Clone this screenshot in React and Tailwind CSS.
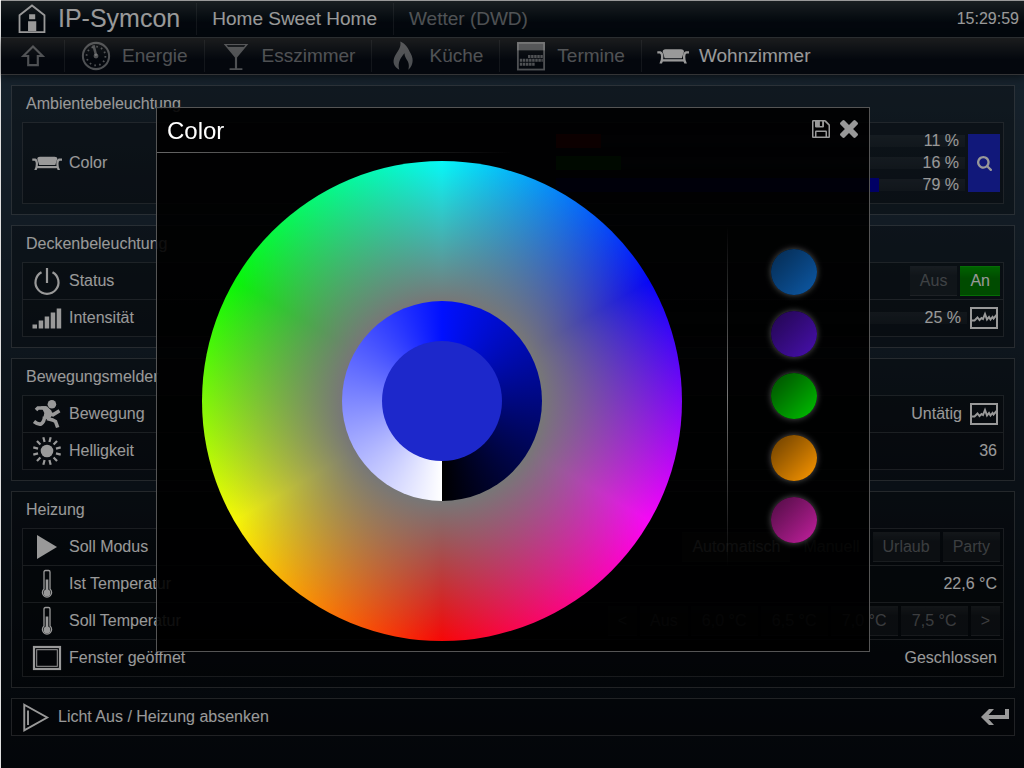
import React from "react";

function Icon({ children, size = "size-[30px]", className = "" }) {
  return (
    <svg viewBox="0 0 30 30" aria-hidden="true" fill="currentColor" className={`${size} shrink-0 ${className}`}>
      {children}
    </svg>
  );
}

const HouseIcon = () => (
  <Icon size="size-8">
    <path d="M3.300 27.300V11.500L15 2.300 26.700 11.500v15.800z" fill="none" stroke="currentColor" strokeWidth="1.700" />
    <path d="M12.300 10.500h5.700v4.700h-5.700zM11.300 17h7.700v9.300h-7.700z" />
  </Icon>
);

const UpIcon = () => (
  <Icon size="size-8">
    <path d="M15 6L24 15H19.500v8.500H10.500V15H6z" fill="none" stroke="currentColor" strokeWidth="2" />
  </Icon>
);

const GaugeIcon = () => (
  <Icon size="size-8">
    <circle cx="15" cy="15" r="12.300" fill="none" stroke="currentColor" strokeWidth="1.900" />
    <circle cx="15" cy="15" r="8.800" fill="none" stroke="currentColor" strokeWidth="1.700" strokeDasharray="1.500 3.107" />
    <circle cx="15" cy="15" r="2.300" />
    <path d="M11.500 5.200l2.300-.6L16.300 14.500l-2.300.6z" />
  </Icon>
);

const GlassIcon = () => (
  <Icon size="size-8">
    <path d="M3.500 3.800h23L16 16.500V26.500h5v1.600H9v-1.600h5V16.500z" />
    <path d="M6.200 4.900h17.600l-1.300 1.500H7.500z" fill="#0a0f16" />
  </Icon>
);

const FlameIcon = () => (
  <Icon size="size-8">
    <path d="M12.500 1.500c5 2.500 7 5.500 8.500 9 4 6 4.500 12-1 17.500 1.300-5 0-7.500-2-10.500-1-1.500-1.600-3-1.500-5-3 3-7 8.500-5 15.500-5-3-6.500-7-4.500-12 3-6 6.500-8.500 5.500-14.500z" />
  </Icon>
);

const CalendarIcon = () => (
  <Icon size="size-8">
    <rect x="2.700" y="2.700" width="24.600" height="25" fill="none" stroke="currentColor" strokeWidth="1.700" />
    <rect x="2" y="2" width="26" height="7.700" />
    <path d="M12.200 15.500H26M4.500 19H26M4.500 22.700h14.500" fill="none" stroke="currentColor" strokeWidth="2.900" strokeDasharray="2.300 .6" />
  </Icon>
);

const SofaIcon = ({ size }) => (
  <Icon size={size}>
    <path d="M5.300 11Q5.300 8.800 8 8.700H22.500Q25.300 8.800 25.300 11L23.300 17H7.200z" />
    <path d="M5 18h20.500v2.200H5z" />
    <path d="M.3 10.500v2.200h2.300q1.300.5 1.200 3 .1 3.500-1.500 6.300h2.400q1.300-2.300 1.300-6.300 0-4.500-2.700-5.200zM30 10.500v2.200h-2.300q-1.300.5-1.200 3-.1 3.500 1.500 6.300h-2.400q-1.300-2.300-1.300-6.300 0-4.500 2.700-5.200z" />
  </Icon>
);

const PowerIcon = () => (
  <Icon>
    <path d="M9.500 6.200A11.500 11.500 0 1 0 20.500 6.200M15 2v15" fill="none" stroke="currentColor" strokeWidth="2.200" />
  </Icon>
);

const BarsIcon = () => (
  <Icon>
    <path d="M.5 21.500H5v4H.5zM6.700 17.500h4.500v8H6.700zM12.700 13.500h4.500v12h-4.500zM18.700 9.500h4.500v16h-4.500zM24.700 5.500h4.500v20h-4.500z" />
  </Icon>
);

const RunnerIcon = () => (
  <Icon>
    <circle cx="19.900" cy="5.300" r="4.300" />
    <path d="M9 7.300h6l4.500 4.500.8 3.700-3 5.500-6-2 1-5z" />
    <path d="M14 9H6L4 11M18.500 15l2.500.8 6.500-4M12.500 17.500q0 5-3.500 7.500-3 .7-7-2.500M15 19.500l5.500 1.500 3 1.500 2.200 6" fill="none" stroke="currentColor" strokeWidth="3.600" />
  </Icon>
);

const SunIcon = () => (
  <Icon>
    <circle cx="15" cy="15" r="6.300" />
    {[15, 45, 75, 105, 135, 165, 195, 225, 255, 285, 315, 345].map((a) => (
      <rect key={a} x="13.900" y=".8" width="2.200" height="4.900" transform={`rotate(${a} 15 15)`} />
    ))}
  </Icon>
);

const PlayIcon = () => (
  <Icon>
    <path d="M5 3l20 12L5 27z" />
  </Icon>
);

const ThermoIcon = () => (
  <Icon>
    <path d="M12 20V3q0-1.500 1.500-1.500h3q1.500 0 1.500 1.500v17a4.600 4.600 0 1 1-6 0z" fill="none" stroke="currentColor" strokeWidth="1.300" />
    <circle cx="15" cy="24" r="3.400" />
    <path d="M13.700 10.500h2.600V22h-2.600z" />
  </Icon>
);

const WindowIcon = () => (
  <Icon>
    <rect x="2" y="4" width="26" height="22" fill="none" stroke="currentColor" strokeWidth="2.200" />
    <rect x="4.700" y="6.700" width="20.600" height="16.600" fill="none" stroke="currentColor" strokeWidth="1" />
  </Icon>
);

const ScriptIcon = () => (
  <Icon size="size-8">
    <path d="M4 3.500L25.500 15.500 4 27.500z" fill="none" stroke="currentColor" strokeWidth="1.800" />
    <path d="M7.500 9v13.500" stroke="currentColor" strokeWidth="1.800" />
  </Icon>
);

function GraphButton({ label }) {
  return (
    <button type="button" aria-label={label} className="flex shrink-0">
      <svg viewBox="0 0 28 22" aria-hidden="true" className="h-[22px] w-[28px]" fill="none" stroke="currentColor">
        <rect x="1" y="1" width="26" height="20" strokeWidth="2" />
        <path d="M2 13.500h2.500l3-3 2 2.500 2-2 1.500 1 2-5 2 5.500 2-2.500 1.500 2.500 2-2.500 1 1.500 4-4.500" strokeWidth="2" />
      </svg>
    </button>
  );
}

function Slider({ label, value, fill }) {
  return (
    <div className="relative h-3.5 w-[409px]">
      <input
        type="range"
        aria-label={label}
        defaultValue={value}
        className="block h-3.5 w-full appearance-none bg-no-repeat [&::-webkit-slider-thumb]:size-0 [&::-webkit-slider-thumb]:appearance-none"
        style={{
          backgroundImage: `linear-gradient(${fill}, ${fill}), linear-gradient(rgba(255,255,255,0.07), rgba(255,255,255,0.04))`,
          backgroundSize: `${value}% 100%, 100% 12px`,
          backgroundPosition: "left center, left center",
        }}
      />
      <span className="pointer-events-none absolute inset-y-0 right-1.5 leading-[14px]">{value} %</span>
    </div>
  );
}

function Choice({ children, state = "idle", width = "" }) {
  const looks = {
    idle: "border-y border-white/5 bg-white/5 bg-gradient-to-b from-white/5 to-transparent to-30% text-white/35",
    bright: "border-y border-white/5 bg-white/10 text-white/90",
    green: "border-y border-[#0ab40a] bg-gradient-to-b from-[#00a400] to-[#007e00] to-40% text-white",
    dark: "text-white/40",
  };
  return (
    <button type="button" className={`h-[30px] whitespace-nowrap px-2.5 leading-7 ${looks[state]} ${width}`}>
      {children}
    </button>
  );
}

function Panel({ title, children }) {
  return (
    <section className="border border-white/20 bg-black/25 px-2.5 pb-2.5">
      <h2 className="h-9 pl-1 leading-[35px]">{title}</h2>
      <div className="divide-y divide-white/15 border border-white/15 bg-black/20">{children}</div>
    </section>
  );
}

function Row({ icon, label, tall = false, pad = "pr-1.5", children }) {
  return (
    <div className={`box-content flex items-center ${tall ? "h-20" : "h-9"}`}>
      <div className={`flex flex-1 items-center gap-[7px] pl-[9px] ${pad}`}>
        {icon}
        <span className="whitespace-nowrap">{label}</span>
        <div className="ml-auto flex items-center gap-[3px]">{children}</div>
      </div>
    </div>
  );
}

function Tab({ icon, active, last, children }) {
  return (
    <a
      href="#"
      className={`flex h-8 items-center gap-2.5 whitespace-nowrap pl-[15px] pr-4 ${last ? "" : "border-r border-white/10"} ${active ? "text-white" : "text-white/50"}`}
    >
      {icon}
      {children}
    </a>
  );
}

const swatches = [
  { name: "Blau", look: "from-[#052a50] to-[#0d5aa8]" },
  { name: "Violett", look: "from-[#22064e] to-[#4810b0]" },
  { name: "Grün", look: "from-[#004c00] to-[#00c400]" },
  { name: "Orange", look: "from-[#6a3e00] to-[#ff9900]" },
  { name: "Magenta", look: "from-[#4f0c43] to-[#c4209f]" },
];

function ColorDialog() {
  return (
    <div className="fixed inset-y-0 left-px right-0 flex items-start justify-center bg-black/40 pl-px pt-[107px]">
      <div role="dialog" aria-label="Color" className="border border-[#555] bg-black/90 text-white">
        <header className="flex h-11 items-center pl-2.5 pr-[11px]">
          <h1 className="pt-0.5 text-2xl">Color</h1>
          <div className="ml-auto flex items-center gap-2.5 pb-0.5 text-[#999]">
            <button type="button" aria-label="Speichern">
              <svg viewBox="0 128 1536 1536" className="size-[18px]" fill="currentColor" aria-hidden="true">
                <path
                  fillRule="evenodd"
                  d="M0 224Q0 128 96 128H1090Q1150 128 1200 178L1486 464Q1536 514 1536 574V1568Q1536 1664 1440 1664H96Q0 1664 0 1568zM128 256V1536H256V1120Q256 1024 352 1024H1184Q1280 1024 1280 1120V1536H1408V600L1064 256H1024V672Q1024 768 928 768H352Q256 768 256 672V256zM384 1152V1536H1152V1152zM672 256H864V640H672z"
                />
              </svg>
            </button>
            <button type="button" aria-label="Schließen">
              <svg viewBox="302 366 1188 1188" className="size-[18px]" fill="currentColor" aria-hidden="true">
                <path d="M1490 1322q0 40-28 68l-136 136q-28 28-68 28t-68-28l-294-294-294 294q-28 28-68 28t-68-28l-136-136q-28-28-28-68t28-68l294-294-294-294q-28-28-28-68t28-68l136-136q28-28 68-28t68 28l294 294 294-294q28-28 68-28t68 28l136 136q28 28 28 68t-28 68l-294 294 294 294q28 28 28 68z" />
              </svg>
            </button>
          </div>
        </header>
        <div className="h-px bg-gradient-to-r from-[#666] to-transparent to-50%" />
        <div className="flex items-start pb-2.5 pl-[45px] pr-[52px] pt-2">
          <div className="grid size-[480px] place-items-center rounded-full bg-[radial-gradient(circle,#777_100px,#77777700_248px),conic-gradient(#0ff,#00f_60deg,#f0f_120deg,#f00_180deg,#ff0_240deg,#0f0_300deg,#0ff)]">
            <div className="grid size-[200px] place-items-center rounded-full bg-[conic-gradient(#0010ff,#000880_90deg,#000_180deg,#fff_180deg,#7f88ff_270deg,#0010ff)]">
              <div className="size-[120px] rounded-full bg-[#1d28cb]" />
            </div>
          </div>
          <div className="ml-[45px] mt-[65px] flex h-[340px] gap-[43px]">
            <div className="w-px bg-gradient-to-b from-transparent via-[#777] to-transparent" />
            <div className="flex flex-col justify-center gap-4">
              {swatches.map((s) => (
                <button
                  key={s.name}
                  type="button"
                  aria-label={s.name}
                  className={`size-[46px] rounded-full bg-gradient-to-br shadow-[0_0_6px_#555] ${s.look}`}
                />
              ))}
            </div>
          </div>
        </div>
      </div>
    </div>
  );
}

export default function App() {
  return (
    <div className="min-h-screen border-l border-t border-[#e0e0e0] border-t-white bg-gradient-to-b from-[#293e50] to-[#060a10] font-['Liberation_Sans',Arial,sans-serif] text-base text-white">
      <div className="flex h-[37px] items-center border-b border-white/20 bg-gradient-to-b from-[#2b3438] to-[#050d16] to-60% text-[19px]">
        <a href="#" className="flex h-8 items-center gap-2.5 border-r border-white/10 pl-[15px] pr-4 text-[25px]">
          <HouseIcon />
          IP-Symcon
        </a>
        <Tab active>Home Sweet Home</Tab>
        <Tab last>Wetter (DWD)</Tab>
        <time className="ml-auto pr-[5px] text-base">15:29:59</time>
      </div>
      <nav className="flex h-[37px] items-center border-b border-white/20 bg-gradient-to-b from-[#2e3032] to-[#070d17] to-60% text-[19px] shadow-[0_2px_8px_#0008]">
        <a href="#" aria-label="Nach oben" className="flex h-8 items-center border-r border-white/10 pl-4 pr-[15px] text-white/50">
          <UpIcon />
        </a>
        <Tab icon={<GaugeIcon />}>Energie</Tab>
        <Tab icon={<GlassIcon />}>Esszimmer</Tab>
        <Tab icon={<FlameIcon />}>Küche</Tab>
        <Tab icon={<CalendarIcon />}>Termine</Tab>
        <Tab icon={<SofaIcon size="size-8" />} active last>
          Wohnzimmer
        </Tab>
      </nav>

      <main className="flex flex-col gap-2.5 p-2.5 pr-[9px]">
        <Panel title="Ambientebeleuchtung">
          <Row icon={<SofaIcon />} label="Color" tall pad="pr-[3px]">
            <div className="flex flex-col gap-2">
              <Slider label="Rot" value={11} fill="#c00000" />
              <Slider label="Grün" value={16} fill="#009a00" />
              <Slider label="Blau" value={79} fill="#0000a8" />
            </div>
            <button type="button" aria-label="Farbe wählen" className="grid h-[58px] w-8 place-items-center bg-[#1d28cb]">
              <svg viewBox="64 128 1664 1664" className="size-[15px]" fill="currentColor" aria-hidden="true">
                <path d="M1216 832q0-185-131.500-316.500t-316.500-131.500-316.500 131.500-131.500 316.500 131.500 316.500 316.500 131.500 316.500-131.500 131.500-316.500zm512 832q0 52-38 90t-90 38q-54 0-90-38l-343-342q-179 124-399 124-143 0-273.500-55.500t-225-150-150-225-55.500-273.500 55.500-273.500 150-225 225-150 273.500-55.500 273.500 55.500 225 150 150 225 55.500 273.500q0 220-124 399l343 343q37 37 37 90z" />
              </svg>
            </button>
          </Row>
        </Panel>

        <Panel title="Deckenbeleuchtung">
          <Row icon={<PowerIcon />} label="Status" pad="pr-[3px]">
            <Choice>Aus</Choice>
            <Choice state="green">An</Choice>
          </Row>
          <Row icon={<BarsIcon />} label="Intensität" pad="pr-[5px]">
            <Slider label="Intensität" value={25} fill="#223" />
            <GraphButton label="Verlauf Intensität" />
          </Row>
        </Panel>

        <Panel title="Bewegungsmelder">
          <Row icon={<RunnerIcon />} label="Bewegung" pad="pr-[5px]">
            <span className="pr-[5px]">Untätig</span>
            <GraphButton label="Verlauf Bewegung" />
          </Row>
          <Row icon={<SunIcon />} label="Helligkeit">
            36
          </Row>
        </Panel>

        <Panel title="Heizung">
          <Row icon={<PlayIcon />} label="Soll Modus" pad="pr-[3px]">
            <Choice state="bright">Automatisch</Choice>
            <Choice state="dark">Manuell</Choice>
            <Choice>Urlaub</Choice>
            <Choice>Party</Choice>
          </Row>
          <Row icon={<ThermoIcon />} label="Ist Temperatur">
            22,6 °C
          </Row>
          <Row icon={<ThermoIcon />} label="Soll Temperatur" pad="pr-[3px]">
            <Choice>&lt;</Choice>
            <Choice>Aus</Choice>
            <Choice width="min-w-[67px]">6,0 °C</Choice>
            <Choice width="min-w-[67px]">6,5 °C</Choice>
            <Choice width="min-w-[67px]">7,0 °C</Choice>
            <Choice width="min-w-[67px]">7,5 °C</Choice>
            <Choice>&gt;</Choice>
          </Row>
          <Row icon={<WindowIcon />} label="Fenster geöffnet">
            Geschlossen
          </Row>
        </Panel>

        <button type="button" className="flex h-[38px] items-center gap-1.5 border border-white/20 bg-black/25 pl-2 pr-[5px] text-left">
          <ScriptIcon />
          <span>Licht Aus / Heizung absenken</span>
          <svg viewBox="0 0 28 16" aria-hidden="true" className="ml-auto h-4 w-[28px]" fill="currentColor">
            <path d="M0 8L8 0h5L7.500 6H24V0h4v10H7.500L13 16H8z" />
          </svg>
        </button>
      </main>

      <ColorDialog />
    </div>
  );
}
